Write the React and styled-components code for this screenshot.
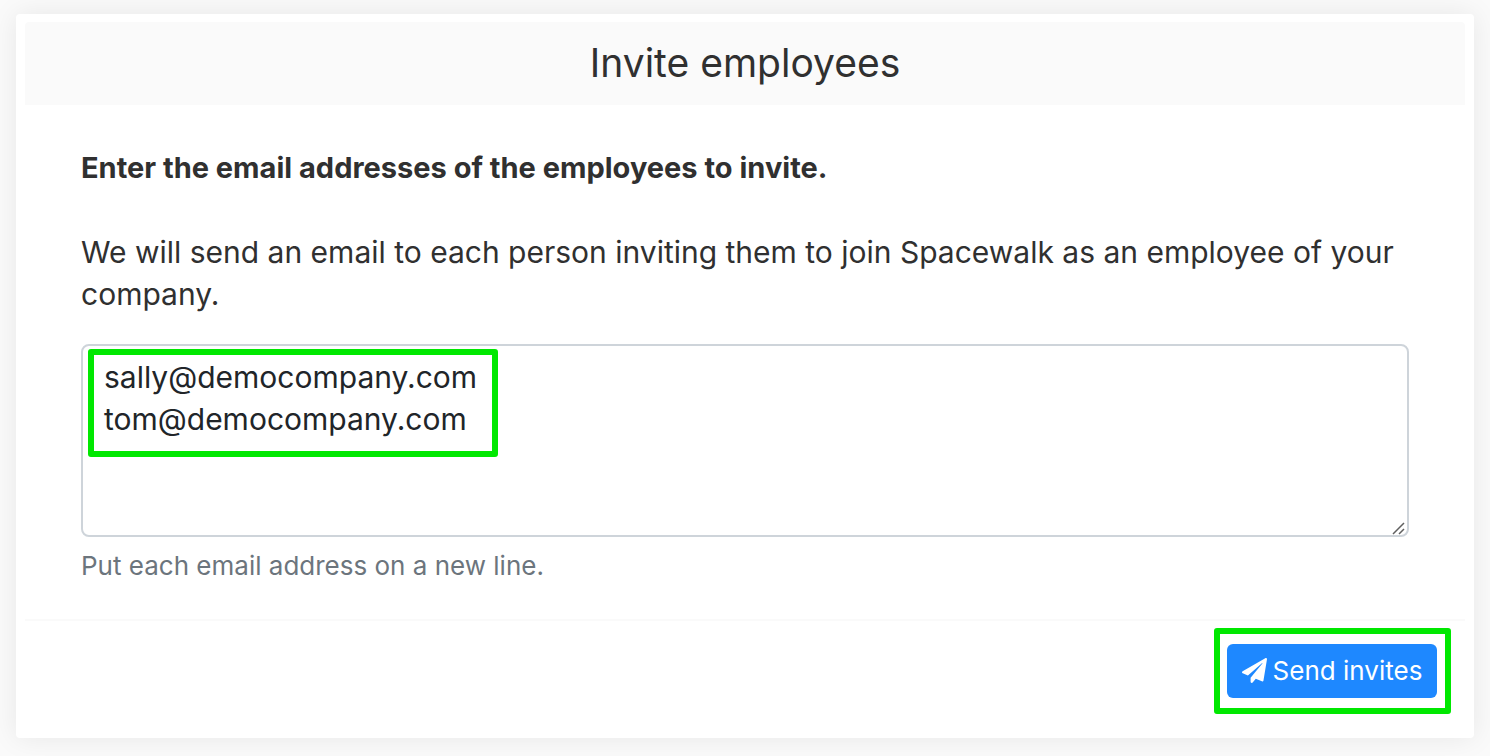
import React from 'react'
import styled, { createGlobalStyle } from 'styled-components'
import { FaPaperPlane } from 'react-icons/fa'

const GlobalStyle = createGlobalStyle`
  * {
    box-sizing: border-box;
  }
  body {
    margin: 0;
    background: #fafafa;
    color: #303030;
    font-family: Inter, "Open Sans", sans-serif;
    font-size: 30px;
    line-height: 42px;
  }
`

const Card = styled.form`
  margin: 14px 16px 18px;
  padding: 8px 9px;
  background: #fff;
  border-radius: 4px;
  box-shadow: 0 0 28px rgba(0, 0, 0, 0.08);
`

const Header = styled.header`
  padding: 15px 16px 17px;
  background: #fafafa;
  border-radius: 4px 4px 0 0;
  text-align: center;
`

const Title = styled.h1`
  margin: 0;
  font-size: 39px;
  font-weight: 400;
  line-height: 51px;
`

const Body = styled.div`
  padding: 42px 56px 35px;
`

const Label = styled.label`
  display: block;
  margin-bottom: 42px;
  font-size: 29px;
  font-weight: 700;
`

const Text = styled.p`
  margin: 0 0 29px;
`

const Field = styled.div`
  position: relative;
`

const Textarea = styled.textarea`
  display: block;
  width: 100%;
  height: 193px;
  padding: 10px 21px;
  border: 2px solid #ced4da;
  border-radius: 8px;
  background: #fff;
  color: #212529;
  font: inherit;
  resize: vertical;
  outline: none;

  &::-webkit-resizer {
    background: transparent;
  }
`

const Grip = styled.svg`
  position: absolute;
  right: 3px;
  bottom: 2px;
  width: 14px;
  height: 14px;
  pointer-events: none;
`

const Highlight = styled.div`
  position: absolute;
  top: ${props => props.$top}px;
  left: ${props => props.$left}px;
  width: ${props => props.$width}px;
  height: ${props => props.$height}px;
  border: 6px solid #00e800;
  border-radius: 3px;
  pointer-events: none;
`

const Help = styled.small`
  display: block;
  margin-top: 10px;
  color: #6c757d;
  font-size: 26px;
  line-height: 37px;
`

const Footer = styled.footer`
  display: flex;
  justify-content: flex-end;
  padding: 23px 28px 32px;
  border-top: 2px solid #fafafa;
`

const ButtonWrap = styled.div`
  position: relative;
`

const Button = styled.button`
  display: flex;
  align-items: center;
  justify-content: center;
  gap: 6px;
  width: 210px;
  height: 54px;
  padding: 0 0 2px;
  border: 0;
  border-radius: 6px;
  background: #1e88ff;
  color: #fff;
  font-family: inherit;
  font-size: 26px;
  white-space: nowrap;
  cursor: pointer;

  svg {
    flex: none;
    width: 25px;
    height: 25px;
  }
`

const App = () => {
  return (
    <>
      <GlobalStyle />
      <Card onSubmit={e => e.preventDefault()}>
        <Header>
          <Title>Invite employees</Title>
        </Header>
        <Body>
          <Label htmlFor={'emails'}>Enter the email addresses of the employees to invite.</Label>
          <Text>
            We will send an email to each person inviting them to join Spacewalk as an employee of your company.
          </Text>
          <Field>
            <Textarea
              id={'emails'}
              aria-describedby={'emails-help'}
              spellCheck={false}
              defaultValue={'sally@democompany.com\ntom@democompany.com'}/>
            <Grip viewBox={'0 0 14 14'} stroke={'#606060'} strokeWidth={'1.5'}>
              <path d={'M1 13 12 2M7 13l5-5'}/>
            </Grip>
            <Highlight $top={5} $left={7} $width={410} $height={108}/>
          </Field>
          <Help id={'emails-help'}>Put each email address on a new line.</Help>
        </Body>
        <Footer>
          <ButtonWrap>
            <Button type={'submit'}>
              <FaPaperPlane aria-hidden={true}/>
              Send invites
            </Button>
            <Highlight $top={-16} $left={-13} $width={237} $height={86}/>
          </ButtonWrap>
        </Footer>
      </Card>
    </>
  )
}

export default App
